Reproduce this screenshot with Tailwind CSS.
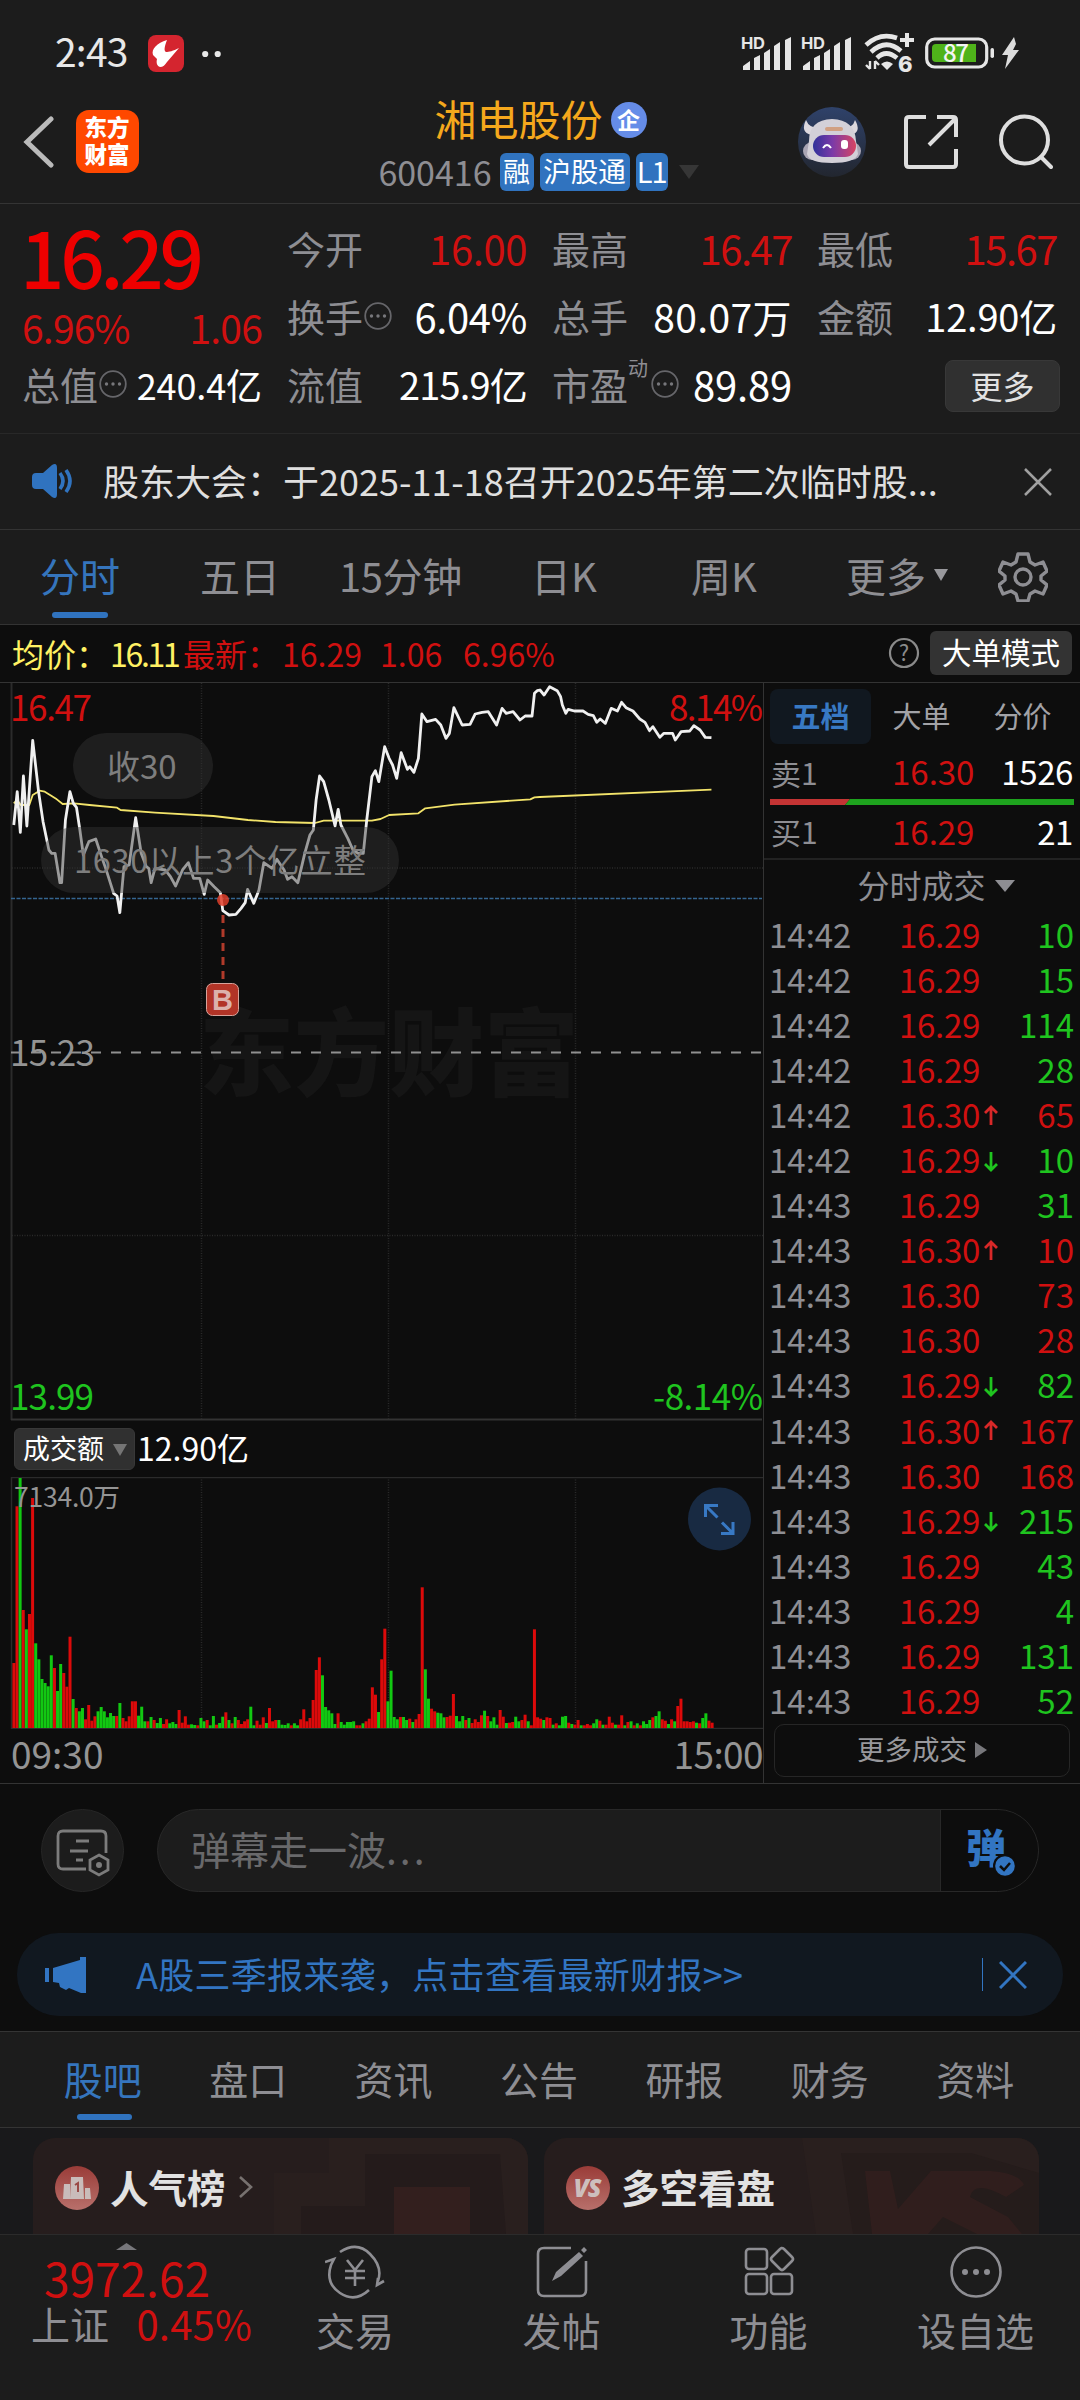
<!DOCTYPE html>
<html lang="zh-CN">
<head>
<meta charset="utf-8">
<title>湘电股份 600416</title>
<script src="https://cdn.jsdelivr.net/npm/@tailwindcss/browser@4"></script>
</head>
<body class="w-[1080px] h-[2400px] overflow-hidden bg-[#0d0d0d] text-[#8e8e93] font-['Noto_Sans_CJK_SC',sans-serif] leading-none">
<svg class="hidden">
  <symbol id="dots" viewBox="0 0 28 28"><circle cx="14" cy="14" r="12.8" fill="none" stroke="#66666a" stroke-width="1.8"/><g fill="#77777b"><circle cx="7.5" cy="14" r="1.7"/><circle cx="14" cy="14" r="1.7"/><circle cx="20.5" cy="14" r="1.7"/></g></symbol>
  <symbol id="signal" viewBox="0 0 52 36"><text x="0" y="13" font-size="16.5" font-weight="700" fill="#e6e6e6" font-family="Inter" textLength="24">HD</text><g fill="#e6e6e6"><path d="M2 34v-4l7-5v9zM13 34V22l6-3v15zM23 34V17l6-4v21zM33 34V10l6-4v28zM44 34V4l6-3v33z"/></g></symbol>
</svg>
<div class="flex flex-col h-[2400px]">

<div class="bg-[#1c1c1c]">
  <!-- status bar -->
  <div class="h-[100px] flex items-center pl-[55px] pr-[61px] text-[#e8e8e8]">
    <span class="text-[39px] w-[93px] tracking-[-.8px]">2:43</span>
    <svg class="w-9 h-[37px] mt-[6px]" viewBox="0 0 36 37"><rect width="36" height="37" rx="8" fill="#d4252f"/><path d="M19 5C9 8 3 14 5 20l4 4c-1 4 0 7 3 8 3 0 5-2 7-5L31 13c-6 3-10 4-13 4-2-1-2-4 1-12z" fill="#fff"/></svg>
    <svg class="w-5 h-2 ml-[18px] mt-[7px]" viewBox="0 0 20 8"><circle cx="3.2" cy="4" r="3.1" fill="#e8e8e8"/><circle cx="15.7" cy="4" r="3.1" fill="#e8e8e8"/></svg>
    <svg class="w-[52px] h-9 ml-auto mt-[7px]"><use href="#signal"/></svg>
    <svg class="w-[52px] h-9 ml-[8px] mt-[7px]"><use href="#signal"/></svg>
    <svg class="w-[50px] h-10 ml-[11px] mt-[6px] overflow-visible" viewBox="0 0 50 40"><g fill="none" stroke="#e6e6e6" stroke-width="4.600"><path d="M2 12Q16-1 33 5M7 19q15-14 30-1M13 25q9-9 20 0"/><path d="M43 0v14M36 7h14" stroke-width="4"/></g><path d="M17 31q6-5 12 0l-6 6z" fill="#e6e6e6"/><path d="M6 28v8m-4-4l4 4M11 36v-8m4 4l-4-4" stroke="#e6e6e6" stroke-width="2.400" fill="none"/><text x="34" y="39" font-size="22" font-weight="800" fill="#e6e6e6" font-family="Inter">6</text></svg>
    <svg class="w-[70px] h-8 ml-[11px] mt-[6px] overflow-visible" viewBox="0 0 70 32"><rect x="1.700" y="2" width="60" height="28" rx="8" fill="none" stroke="#e6e6e6" stroke-width="3.200"/><path d="M11 7h40v18H11q-4 0-4-4V11q0-4 4-4z" fill="#4fb31a"/><rect x="65.500" y="11" width="3.500" height="10" rx="1.700" fill="#e6e6e6"/><text x="31" y="25" text-anchor="middle" font-size="24" font-weight="500" fill="#f4f4f4" textLength="26">87</text></svg>
    <svg class="w-[18px] h-8 ml-[6px] mt-[5px]" viewBox="0 0 18 32"><path d="M13 0L1 18h6L4 32 18 13h-6l3-6z" fill="#dcdcdc"/></svg>
  </div>
  <!-- title bar -->
  <div class="h-[104px] grid grid-cols-[1fr_auto_1fr] border-b border-[#343434]">
    <div class="flex items-center pl-[22px] pb-[20px]">
      <svg class="w-8 h-[52px]" viewBox="0 0 32 52"><path d="M29 3L5 26l24 23" fill="none" stroke="#bababa" stroke-width="5" stroke-linecap="round"/></svg>
      <div class="ml-[22px] w-[63px] h-[63px] rounded-[13px] bg-[#ff4800] text-white font-black text-[22.500px] leading-[27px] text-center pt-[3px] pr-px">东方<br>财富</div>
    </div>
    <div class="flex flex-col items-center -ml-[3px]">
      <div class="flex items-center h-9 text-[42px] text-[#f5a81c] ml-1">湘电股份<span class="ml-2 mt-[3px] w-9 h-9 rounded-full bg-[#658ce8] text-white text-[23px] font-bold leading-[34px] text-center">企</span></div>
      <div class="flex items-center h-[37px] mt-[17px] text-[34px]">600416
        <span class="ml-[8px] w-[34px] h-[38px] rounded-md bg-[#3073bf] text-white text-[27px] leading-[35px] text-center">融</span>
        <span class="ml-[6px] w-[90px] h-[38px] rounded-md bg-[#3073bf] text-white text-[27.500px] leading-[35px] text-center">沪股通</span>
        <span class="ml-[6px] w-[32px] h-[38px] rounded-md bg-[#3073bf] text-white text-[29px] leading-[35px] text-center tracking-[-1px]">L1</span>
        <svg class="ml-[11px] w-5 h-[14px]" viewBox="0 0 20 14"><path d="M0 0h20L10 14z" fill="#363636"/></svg>
      </div>
    </div>
    <div class="flex items-center justify-end pr-[27px] pb-[20px]">
      <svg class="w-[68px] h-[70px]" viewBox="0 0 68 70">
        <defs><linearGradient id="av" x1="0" y1="0" x2="0" y2="1"><stop stop-color="#2f426a"/><stop offset="1" stop-color="#22262f"/></linearGradient><linearGradient id="vis"><stop stop-color="#30319a"/><stop offset=".45" stop-color="#7b3aa8"/><stop offset="1" stop-color="#d84462"/></linearGradient></defs>
        <ellipse cx="34" cy="35" rx="34" ry="35" fill="url(#av)"/>
        <path d="M8 13q-6 12 5 15l8-7q-10 0-13-8zM57 13q7 12-4 15l-8-7q10 0 12-8z" fill="#dcd8de"/>
        <rect x="5" y="35" width="58" height="18" rx="9" fill="#a9a5b4"/>
        <path d="M11 34q0-21 23-22 23 1 24 22l2 13q-3 9-26 9T9 47z" fill="#d3d0d8"/>
        <rect x="15" y="28" width="43" height="22" rx="11" fill="url(#vis)"/>
        <path d="M25 41q4-6 8 0" stroke="#fff" stroke-width="2" fill="none"/><rect x="43" y="33" width="7" height="9" rx="3" fill="#fff"/><rect x="27" y="20" width="18" height="4" rx="2" fill="#d1a083"/>
      </svg>
      <svg class="w-[54px] h-[54px] ml-[38px]" viewBox="0 0 54 54" fill="none" stroke="#dedede" stroke-width="4"><path d="M22 2H5Q2 2 2 5v44q0 3 3 3h44q3 0 3-3V34M33 2h16q3 0 3 3v17M25 30L51 4"/></svg>
      <svg class="w-[54px] h-[56px] ml-[41px]" viewBox="0 0 54 56" fill="none" stroke="#dedede" stroke-width="4"><circle cx="25.500" cy="26" r="23.500"/><path d="M42 43l10 10" stroke-linecap="round"/></svg>
    </div>
  </div>

  <!-- quote figures -->
  <div class="h-[230px] pt-[10px] pl-[22px] pr-[23px] border-b border-[#282828] grid grid-cols-4 grid-rows-[68px_68px_68px] gap-x-[25px] text-[38px]">
    <div class="row-span-2 text-[#d01010]">
      <div class="h-[82px] flex items-center -ml-[2px] text-[78px] font-medium text-[#ee0000] tracking-[-4.300px]">16.29</div>
      <div class="h-[62px] flex items-center justify-between text-[39px] tracking-[-.8px]"><span>6.96%</span><span>1.06</span></div>
    </div>
    <div class="flex items-center justify-between pb-px">今开<span class="text-[40px] text-[#d01010] tracking-[-.4px]">16.00</span></div>
    <div class="flex items-center justify-between pb-px">最高<span class="text-[40px] text-[#d01010] tracking-[-1.500px]">16.47</span></div>
    <div class="flex items-center justify-between pb-px">最低<span class="text-[40px] text-[#d01010] tracking-[-1.500px]">15.67</span></div>
    <div class="flex items-center">换手<svg class="w-7 h-7 ml-px"><use href="#dots"/></svg><span class="ml-auto text-[40px] text-white tracking-[-.4px]">6.04%</span></div>
    <div class="flex items-center justify-between">总手<span class="text-[39px] text-white tracking-[.4px]">80.07万</span></div>
    <div class="flex items-center justify-between">金额<span class="text-[38px] text-white tracking-[-.2px]">12.90亿</span></div>
    <div class="flex items-center">总值<svg class="w-7 h-7 ml-px"><use href="#dots"/></svg><span class="ml-auto text-[36px] text-white tracking-[-.1px]">240.4亿</span></div>
    <div class="flex items-center justify-between">流值<span class="text-[38px] text-white tracking-[-.8px]">215.9亿</span></div>
    <div class="flex items-center">市盈<span class="text-[20px] self-start pt-[8px]">动</span><svg class="w-7 h-7 ml-[3px]"><use href="#dots"/></svg><span class="ml-auto text-[40px] text-white tracking-[-.2px]">89.89</span></div>
    <div class="flex items-center justify-end"><span class="w-[115px] h-[52px] mt-1 -mr-[3px] rounded-lg bg-[#303030] border border-[#383838] text-[#e2e2e2] text-[32px] leading-[48px] text-center">更多</span></div>
  </div>

  <!-- notice -->
  <div class="h-[96px] flex items-center pl-8 pr-[28px] pb-[3px] border-b border-[#333] text-[36px] text-[#dfdfdf]">
    <svg class="w-10 h-9 mt-[2px]" viewBox="0 0 40 36"><path d="M4 10h7L20 2q5-3 5 3v26q0 6-5 3l-9-8H4q-4 0-4-4v-8q0-4 4-4z" fill="#3073bf"/><path d="M28 10q6 8 0 16M34 7q8 11 0 22" fill="none" stroke="#3073bf" stroke-width="3.600"/></svg>
    <span class="ml-[31px] whitespace-nowrap">股东大会：于2025-11-18召开2025年第二次临时股...</span>
    <svg class="w-7 h-7 ml-auto mt-[3px]" viewBox="0 0 28 28"><path d="M1 1l26 26M27 1L1 27" stroke="#a0a0a0" stroke-width="2.500"/></svg>
  </div>

  <!-- period tabs -->
  <div class="h-[95px] flex items-center pb-[5px] border-b border-[#333] text-[40px] relative">
    <span class="ml-10 w-[160px] text-[#3575bd]">分时</span>
    <span class="w-[139px]">五日</span>
    <span class="w-[192px] tracking-[-.4px]">15分钟</span>
    <span class="w-[160px]">日K</span>
    <span class="w-[155px]">周K</span>
    <span>更多</span>
    <svg class="w-[14px] h-3 ml-[8px]" viewBox="0 0 14 12"><path d="M0 0h14L7 12z" fill="#98989c"/></svg>
    <svg class="w-[50px] h-[50px] ml-auto mr-8 mt-[4px]" viewBox="0 0 50 50" fill="none" stroke="#8e8e93" stroke-width="3.400" stroke-linejoin="round"><path d="M20 2h10l2 8 5 3 8-3 4 9-6 5v4l6 5-4 9-8-3-5 3-2 7H20l-2-7-5-3-8 3-4-9 6-5v-4l-6-5 4-9 8 3 5-3z"/><circle cx="25" cy="25" r="8"/></svg>
    <i class="absolute left-[52px] bottom-[6px] w-14 h-[6px] rounded-full bg-[#3073bf]"></i>
  </div>
</div>

<!-- average line -->
<div class="h-[58px] flex items-center pl-3 pr-2 border-b border-[#333] text-[32px] text-[#d01010]">
  <span class="text-[#fff163] w-[98px]">均价：</span><span class="text-[#fff163] w-[73px] tracking-[-2.300px]">16.11</span>
  <span class="w-[99px]">最新：</span><span class="w-[98px]">16.29</span><span class="w-[83px]">1.06</span><span>6.96%</span>
  <svg class="w-8 h-8 ml-auto overflow-visible" viewBox="0 0 32 32"><circle cx="16" cy="16" r="14" fill="none" stroke="#8a8a8a" stroke-width="2.200"/><text x="16" y="24" font-size="22" text-anchor="middle" fill="#8a8a8a">?</text></svg>
  <span class="ml-[10px] w-[142px] h-[44px] rounded-md bg-[#333] text-white text-[29.500px] leading-[41px] text-center">大单模式</span>
</div>

<!-- chart and order book -->
<div class="h-[1102px] flex border-b border-[#333]">
  <div class="w-[763px]">
    <svg class="block w-[763px] h-[738px]" viewBox="0 0 763 738" font-size="35">
      <text x="199" y="406" font-size="95" font-weight="900" fill="#151515" textLength="380">东方财富</text>
      <path d="M11.500 0v737" stroke="#2b2b2b" stroke-width="2"/><path d="M11 736.500h751" stroke="#333" stroke-width="2"/>
      <path d="M201.500 0v737M388.500 0v737M575.500 0v737M12 185h751M12 552.500h751" stroke="#2a2a2a" stroke-width="1.500" stroke-dasharray="1 1.500"/>
      <path d="M11 369.500h751" stroke="#909090" stroke-width="2" stroke-dasharray="10 10"/>
      <path d="M11 215.500h751" stroke="#346590" stroke-width="1.300" stroke-dasharray="4 1.500"/>
      <g fill="none" stroke-linejoin="round">
        <g transform="translate(0 -163) scale(.34436 .33333)">
          <polyline vector-effect="non-scaling-stroke" stroke="#f2e36a" stroke-width="1.800" points="40,850 50,840 60,855 85,855 95,825 115,812 130,815 150,828 165,838 182,852 215,850 260,855 340,863 350,870 450,878 620,888 720,900 800,906 915,909 940,902 1080,902 1105,897 1130,885 1215,880 1235,865 1320,854 1540,838 1552,832 1568,831 2066,809"/>
          <polyline vector-effect="non-scaling-stroke" stroke="#f0f0f0" stroke-width="2.800" points="40,915 50,815 59,937 68,768 78,918 95,661 112,815 125,905 142,990 150,1000 160,1000 168,1050 174,1088 179,1088 190,900 203,815 213,850 222,862 232,930 242,1005 258,965 278,957 295,1010 310,1055 330,1120 340,1128 348,1178 360,1040 375,1035 394,893 410,1000 425,1040 432,1045 439,1088 450,1045 480,1050 495,1070 510,1098 530,1050 547,1028 562,1075 580,1075 593,1123 603,1080 622,1100 640,1118 647,1172 665,1185 685,1183 700,1165 712,1148 719,1108 737,1150 752,1110 766,1028 790,1045 804,1018 825,1050 835,1078 848,1070 865,1088 885,1000 900,945 910,930 918,840 928,768 940,785 955,840 973,918 982,868 990,915 1010,955 1025,990 1040,1000 1055,1000 1065,900 1080,770 1090,752 1100,785 1117,680 1130,715 1140,735 1152,775 1165,698 1183,748 1190,740 1202,757 1215,715 1225,582 1240,605 1265,598 1280,615 1295,655 1305,640 1318,563 1342,615 1365,613 1380,582 1400,577 1418,575 1442,615 1458,565 1470,580 1490,575 1510,600 1525,588 1545,588 1552,520 1560,512 1568,510 1580,525 1596,500 1618,512 1628,530 1633,555 1643,580 1650,568 1668,573 1693,573 1708,583 1723,587 1733,607 1743,597 1758,610 1775,565 1793,573 1805,547 1818,563 1838,573 1858,597 1873,607 1886,632 1896,620 1916,652 1928,640 1953,640 1961,660 1978,635 2003,633 2015,617 2033,630 2048,652 2066,653"/>
        </g>
      </g>
      <circle cx="223" cy="217" r="6" fill="#e0402c" opacity=".85"/>
      <path d="M223 232v66" stroke="#b03a2a" stroke-width="3" stroke-dasharray="8 6"/>
      <rect x="206.500" y="300.500" width="32" height="32" rx="6" fill="#b23427" stroke="#d8a39b"/><text x="222.500" y="327" font-size="29" font-weight="700" fill="#dcb2ac" text-anchor="middle" font-family="Liberation Sans">B</text>
      <text x="10" y="38" fill="#d01010" textLength="82">16.47</text>
      <text x="763" y="38" fill="#d01010" text-anchor="end" textLength="94">8.14%</text>
      <text x="10" y="383" fill="#949494" textLength="85">15.23</text>
      <text x="10" y="727" fill="#1fc41f" textLength="84">13.99</text>
      <text x="763" y="727" fill="#1fc41f" text-anchor="end" textLength="110">-8.14%</text>
      <g font-size="33" fill="#7e7e7e"><rect x="73" y="50" width="140" height="66" rx="33" fill="#333" fill-opacity=".45"/><text x="107" y="96">收30</text>
      <rect x="41" y="144" width="358" height="66" rx="33" fill="#333" fill-opacity=".45"/><text x="74" y="190" font-size="32.500" textLength="292">1630以上3个亿立整</text></g>
    </svg>
    <div class="h-[56px] flex items-center pl-[14px] text-white text-[32px]">
      <span class="w-[121px] h-[42px] mt-px pl-[8px] pb-[3px] rounded-md bg-[#303030] border border-[#383838] flex items-center text-[27px]">成交额<svg class="w-[14px] h-3 ml-[9px] mt-1" viewBox="0 0 14 12"><path d="M0 0h14L7 12z" fill="#757575"/></svg></span>
      <span class="ml-[2px] pb-[3px]">12.90亿</span>
    </div>
    <svg class="block w-[763px] h-[252px]" viewBox="0 0 763 252">
      <path d="M11.500 252V.5H763M11 251.500h752" fill="none" stroke="#2b2b2b" stroke-width="1.500"/>
      <path d="M201.500 0v251M388.500 0v251M575.500 0v251" stroke="#2a2a2a" stroke-width="1.500" stroke-dasharray="1 1.500"/>
      <g id="volume"></g>
      <text x="14" y="30" font-size="26.500" fill="#949494" textLength="106">7134.0万</text>
      <circle cx="719.500" cy="42" r="31.500" fill="#182a42"/>
      <path d="M705.500 40V28.500H718M707 30l10.500 10.500M733 45v11.500H721M731.500 55L722 45.500" stroke="#3879c4" stroke-width="3" fill="none"/>
    </svg>
    <div class="h-[50px] flex items-center justify-between pl-[11px] text-[37px] text-[#949494]"><span>09:30</span><span class="tracking-[-.6px]">15:00</span></div>
  </div>
  <div class="flex-1 border-l border-[#333]">
    <div class="flex h-[69px] pt-[6px] pl-[6px] text-[29px] text-[#a2a2a6] text-center leading-[52px]">
      <span class="w-[101px] h-[55px] rounded-lg bg-[#111820] text-[#3879c4] font-bold">五档</span><span class="w-[101px]">大单</span><span class="w-[101px]">分价</span>
    </div>
    <div class="h-[40px] flex items-center pl-[7px] pr-[7px] text-[33px]"><span class="w-[121px] text-[30px]">卖1</span><span class="text-[#d01010]">16.30</span><span class="ml-auto text-white tracking-[-.4px]">1526</span></div>
    <svg class="block w-[304px] h-[6px] ml-[6px] mt-[7px]" viewBox="0 0 304 6"><path d="M0 0h80l-5 6H0z" fill="#c43434"/><path d="M80 0h224v6H75z" fill="#1ea31e"/></svg>
    <div class="h-[55px] flex items-center pl-[7px] pr-[7px] text-[33px] border-b-2 border-[#222] box-border"><span class="w-[121px] text-[30px]">买1</span><span class="text-[#d01010]">16.29</span><span class="ml-auto text-white tracking-[-.4px]">21</span></div>
    <div class="h-[52px] flex items-center justify-center text-[32px] pb-[4px] pl-7">分时成交<svg class="w-5 h-3 ml-[9px] mt-[4px]" viewBox="0 0 20 12"><path d="M0 0h20L10 12z" fill="#8e8e93"/></svg></div>
    <div id="trades" class="h-[812px]"></div>
    <div class="mx-[10px] h-[53px] rounded-[10px] border border-[#262626] flex items-center justify-center text-[27.500px] text-[#98989c] pb-[4px]">更多成交<svg class="w-3 h-4 ml-[8px] mt-1" viewBox="0 0 12 16"><path d="M0 0l12 8L0 16z" fill="#77777b"/></svg></div>
  </div>
</div>

<!-- comment input -->
<div class="h-[149px] pt-[25px] pl-[41px] flex">
  <div class="w-[83px] h-[83px] rounded-full bg-[#1c1c1c] border border-[#262626] flex items-center justify-center">
    <svg class="w-[54px] h-[48px] mt-1" viewBox="0 0 54 48" fill="none" stroke="#7c7c7c" stroke-width="2.800"><path d="M30 40H7q-5 0-5-5V7q0-5 5-5h38q5 0 5 5v17M20 12h13M14 22h18M20 31h7"/><path d="M43 26l9 5v10l-9 5-9-5V31z"/><circle cx="43" cy="36" r="1.600" fill="#7c7c7c"/></svg>
  </div>
  <div class="ml-[33px] w-[882px] h-[83px] rounded-full bg-[#1c1c1c] border border-[#282828] overflow-hidden flex">
    <span class="flex-1 pl-[33px] text-[39px] leading-[76px] text-[#69696b]">弹幕走一波<span class="tracking-[3px]">...</span></span>
    <span class="w-[98px] bg-[#0d0d0d] border-l border-[#282828] pl-[25px] relative text-[40px] leading-[73px] font-black text-[#3275c2]">弹<svg class="absolute left-[52px] top-[44px] w-6 h-6" viewBox="0 0 24 24"><circle cx="12" cy="12" r="12" fill="#0d0d0d"/><circle cx="12" cy="12" r="9.800" fill="#3275c2"/><path d="M7 12l4 4 6-7" fill="none" stroke="#0d0d0d" stroke-width="2.500"/></svg></span>
  </div>
</div>

<!-- banner -->
<div class="mx-[17px] h-[83px] rounded-full bg-[#111820] flex items-center pl-7 pr-9 text-[36px] text-[#3275c2]">
  <svg class="w-[42px] h-9" viewBox="0 0 42 36"><path d="M0 11h4v14H0zM8 11l27-8V0h6v36h-5l-12-5-3 2-6-3-1-4-6-1z" fill="#3275c2"/></svg>
  <span class="ml-[49px] mb-[4px] whitespace-nowrap tracking-[.3px]">A股三季报来袭，点击查看最新财报&gt;&gt;</span>
  <i class="ml-auto w-px h-[33px] bg-[#3275c2]"></i>
  <svg class="w-7 h-7 ml-4" viewBox="0 0 28 28"><path d="M1 1l26 26M27 1L1 27" stroke="#3275c2" stroke-width="3"/></svg>
</div>

<!-- section tabs -->
<div class="mt-[15px] h-[97px] bg-[#1c1c1c] border-y border-[#343434] relative flex items-center pb-[3px] pl-[30px] pr-8 text-[39px]">
  <span class="flex-1 text-center text-[#3575bd]">股吧</span><span class="flex-1 text-center">盘口</span><span class="flex-1 text-center">资讯</span><span class="flex-1 text-center">公告</span><span class="flex-1 text-center">研报</span><span class="flex-1 text-center">财务</span><span class="flex-1 text-center">资料</span>
  <i class="absolute left-[77px] bottom-[7px] w-[55px] h-[6px] rounded-full bg-[#3073bf]"></i>
</div>

<!-- cards -->
<div class="h-[106px] bg-[#19191b] pt-[10px] px-[33px] flex gap-4 overflow-hidden text-[#e2e2e2] font-bold text-[38.500px]">
  <div class="w-[495px] h-24 rounded-t-[22px] bg-[#261d1d] overflow-hidden relative flex items-center pl-[22px]">
    <svg class="absolute inset-0 w-[495px] h-24" viewBox="0 0 495 96"><path d="M296 0h199v96H241V35h55z" fill="#291f1e"/><path d="M332 16h135l6 80H268V68h64z" fill="#241b1b"/><path d="M361 49h76v47h-76z" fill="#331f1e"/></svg>
    <svg class="relative w-11 h-11 mt-1" viewBox="0 0 44 44"><defs><linearGradient id="rd" x1="0" y1="0" x2="0" y2="1"><stop stop-color="#9a3c38"/><stop offset="1" stop-color="#b8706b"/></linearGradient></defs><circle cx="22" cy="22" r="22" fill="url(#rd)"/><path d="M9 18h6v15H8zM16 11h12l1 22H15zM30 22h5l1 11h-6z" fill="#c9bcba"/><path d="M20 19l3-2v9" stroke="#9a4a46" stroke-width="2" fill="none"/></svg>
    <span class="relative ml-[11px]">人气榜</span>
    <svg class="relative w-4 h-6 ml-[12px] mt-[2px]" viewBox="0 0 16 24"><path d="M2 2l11 10L2 22" fill="none" stroke="#77716f" stroke-width="2.600"/></svg>
  </div>
  <div class="w-[495px] h-24 rounded-t-[22px] bg-[#261d1d] overflow-hidden relative flex items-center pl-[22px]">
    <svg class="absolute inset-0 w-[495px] h-24" viewBox="0 0 495 96"><path d="M258 0h237v96H272z" fill="#291f1e"/><path d="M297 15h130l68 20v61H309z" fill="#251c1b"/><path d="M321 33h25l8 38 33-38h60q28 2 33 14l-18 12q-32-18-36 0l38 20 14 17h-45l-34-17-15 17h-56z" fill="#301e1d"/></svg>
    <svg class="relative w-11 h-11 mt-1" viewBox="0 0 44 44"><circle cx="22" cy="22" r="22" fill="url(#rd)"/><text x="21.500" y="31" text-anchor="middle" font-size="25" font-weight="800" font-style="italic" font-family="Open Sans" fill="#cdbfbd" textLength="28">VS</text></svg>
    <span class="relative ml-[11px]">多空看盘</span>
  </div>
</div>

<!-- bottom navigation -->
<div class="h-[166px] bg-[#1c1c1c] border-t border-[#2b2b2b] flex text-[39px]">
  <div class="w-[252px] flex flex-col text-[#d01010]">
    <svg class="w-[21px] h-[7px] ml-[116px] mt-[8px]" viewBox="0 0 21 7"><path d="M0 7L10.500 0 21 7z" fill="#77777b"/></svg>
    <span class="ml-[44px] mt-[4px] text-[46px] leading-[46px]">3972.62</span>
    <span class="ml-[31px] flex items-center leading-[46px]"><span class="w-[109px] text-[#8e8e93]">上证</span><span class="text-[40px] tracking-[.2px]">0.45%</span></span>
  </div>
  <div class="w-[206px] pt-[10px] flex flex-col items-center">
    <svg class="w-[60px] h-[54px]" viewBox="0 0 60 54" fill="none" stroke="#8e8e93" stroke-width="2.600"><path d="M15 7Q32-4 45 9t8 27M0 17l9-3-3 6Q0 38 15 48t29-3M59 36l-7 4 1-7M22 15l8 10 8-10M30 25v16M20 26h20M20 33h20"/></svg>
    <span class="mt-[11px]">交易</span>
  </div>
  <div class="w-[207px] pt-[10px] flex flex-col items-center">
    <svg class="w-[54px] h-[54px]" viewBox="0 0 54 54" fill="none" stroke="#8e8e93" stroke-width="2.600"><path d="M36 3H9Q3 3 3 9v36q0 6 6 6h36q6 0 6-6V16"/><path d="M17 36l4-9L44 7l4 4-22 20zM46 5l3-3 3 3-3 3z" fill="#8e8e93" stroke="none"/></svg>
    <span class="mt-[11px]">发帖</span>
  </div>
  <div class="w-[207px] pt-[10px] flex flex-col items-center">
    <svg class="w-[52px] h-[54px]" viewBox="0 0 52 54" fill="none" stroke="#8e8e93" stroke-width="2.600"><rect x="3" y="4" width="21" height="20" rx="3"/><rect x="3" y="29" width="21" height="20" rx="3"/><rect x="28" y="29" width="21" height="20" rx="3"/><path d="M38.500 3q1.500 0 2.500 1l8 8q2 2 0 4l-8 8q-2 2-4 0l-8-8q-2-2 0-4l8-8z"/></svg>
    <span class="mt-[11px]">功能</span>
  </div>
  <div class="w-[207px] pt-[10px] flex flex-col items-center">
    <svg class="w-[54px] h-[54px]" viewBox="0 0 54 54" fill="none" stroke="#8e8e93" stroke-width="2.600"><circle cx="27" cy="27" r="24.500"/><g fill="#8e8e93" stroke="none"><circle cx="16" cy="27" r="3"/><circle cx="27" cy="27" r="3"/><circle cx="38" cy="27" r="3"/></g></svg>
    <span class="mt-[11px]">设自选</span>
  </div>
</div>
</div>

<script>
// per-minute turnover: direction and bar height in thirds of a pixel
const bars = 'R195 R665 G750 R354 G296 R342 R690 G254 G206 G147 G135 G125 G218 R180 G111 G192 R165 R124 R274 G87 R60 G50 G60 R26 R69 R22 R35 G50 G63 G50 G32 G45 G36 R36 G75 R30 R20 R35 R80 R80 G37 G64 G20 R20 G33 R24 G15 G30 R12 R26 G14 G18 G12 R54 R16 R35 R10 G11 G9 R8 G30 G20 R24 G8 G36 R10 G15 G34 R47 G24 R14 G33 R24 R12 R20 R26 G64 G8 R22 R10 R32 G15 R60 R20 R24 G24 G10 G9 G14 R8 G14 G8 R26 R56 R20 R30 R84 R174 R212 G158 G63 G53 G44 G12 R44 G18 G10 G18 G18 G20 R8 R8 G14 R20 R28 R122 R100 G48 R206 R298 G80 G172 G33 G26 R33 G33 G24 R28 G18 R26 R42 R422 G176 G88 R58 R50 G46 G44 G32 R33 R37 R102 G36 G20 G36 R24 G30 R15 R26 R18 R38 G52 R36 G20 G32 G10 R54 R34 G15 R16 R18 G34 G20 R24 R40 G20 R8 R296 R32 R28 G24 R32 R30 G10 R14 G8 G34 G36 R16 G12 R10 R24 G8 R8 R12 R8 G14 G26 R22 G10 R10 R34 R16 G10 R10 R38 G8 R18 G20 R8 G14 R8 G20 G12 G24 R32 G36 G50 R26 R22 G12 R26 G20 R66 R88 R20 R20 R18 R20 G16 R14 G30 G44 R22 R16';
document.getElementById('volume').innerHTML = bars.split(' ').map((b, i) => {
  const h = b.slice(1) / 3;
  return `<rect x="${(12.4 + i * 3.117).toFixed(2)}" y="${(251 - h).toFixed(1)}" width="3" height="${h.toFixed(1)}" fill="${b[0] === 'R' ? '#dc0a0a' : '#12c812'}"/>`;
}).join('');

const trades = '42 29 G10,42 29 G15,42 29 G114,42 29 G28,42 30u R65,42 29d G10,43 29 G31,43 30u R10,43 30 R73,43 30 R28,43 29d G82,43 30u R167,43 30 R168,43 29d G215,43 29 G43,43 29 G4,43 29 G131,43 29 G52';
const up = '<svg class="w-[14px] h-5 ml-[4px]" viewBox="0 0 14 20"><path d="M7 20V2M1 8l6-6 6 6" fill="none" stroke="#d82828" stroke-width="2.800"/></svg>';
const down = '<svg class="w-[14px] h-5 ml-[4px] mt-[4px]" viewBox="0 0 14 20"><path d="M7 0v18M1 12l6 6 6-6" fill="none" stroke="#1fc41f" stroke-width="2.800"/></svg>';
document.getElementById('trades').innerHTML = trades.split(',').map(t => {
  const [m, p, v] = t.split(' ');
  const arrow = p[2] === 'u' ? up : p[2] === 'd' ? down : '';
  const tone = v[0] === 'R' ? 'text-[#d01010]' : 'text-[#1fc41f]';
  return `<div class="h-[45.060px] flex items-center pl-[5px] pr-[6px] text-[33px]"><span class="w-[130px]">14:${m}</span><span class="text-[#d01010] tracking-[-.3px]">16.${p.slice(0, 2)}</span>${arrow}<span class="ml-auto ${tone}">${v.slice(1)}</span></div>`;
}).join('');
</script>
</body>
</html>
